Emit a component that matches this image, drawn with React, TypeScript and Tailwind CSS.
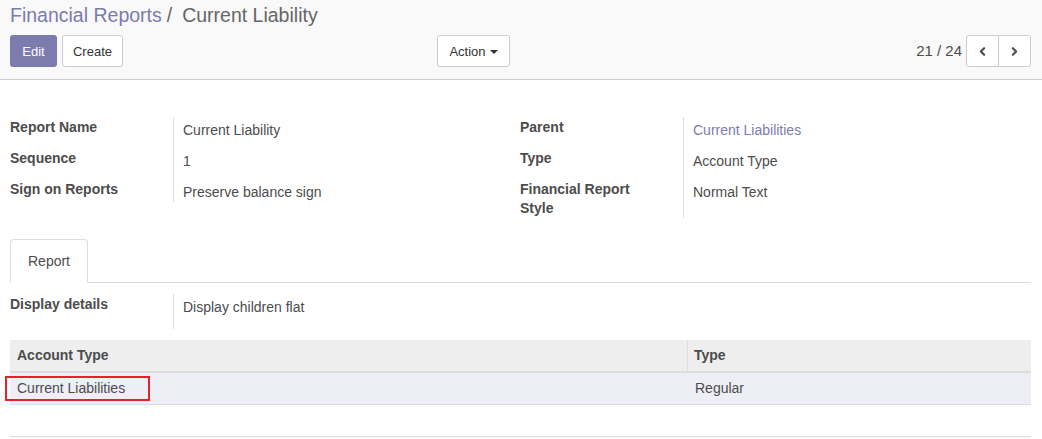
import { ChevronLeft, ChevronRight } from "lucide-react";

const font = "font-['Liberation_Sans','Helvetica_Neue',Arial,sans-serif]";

const Field = ({ label, value, link, last }: { label: string; value: string; link?: boolean; last?: boolean }) => (
  <>
    <div className={`font-bold text-[#4c4c4c] leading-[19px] pt-[1px] pr-[20px] ${last ? "" : "h-[31px]"}`}>{label}</div>
    <div className={`border-l border-[#ddd] pl-[9px] pt-[3px] leading-[20px] ${link ? "text-[#7c7bad]" : "text-[#4c4c4c]"} ${last ? "" : "h-[31px]"}`}>
      {value}
    </div>
  </>
);

export default function App() {
  return (
    <div className={`w-[1042px] h-[439px] overflow-hidden bg-white text-[14px] ${font}`}>
      <div className="h-[80px] bg-[#f9f9f9] border-b border-[#ccc] px-[10px]">
        <div className="h-[35px] pt-[3px] text-[19.5px] leading-[24px]">
          <span className="text-[#7c7bad]">Financial Reports</span>
          <span className="text-[#666] ml-[5px] mr-[10px]">/</span>
          <span className="text-[#666]">Current Liability</span>
        </div>
        <div className="flex items-center h-[32px]">
          <button className="h-[32px] w-[47px] pt-[1px] rounded-[3px] bg-[#7c7bad] text-white text-[13px]">Edit</button>
          <button className="ml-[5px] h-[32px] w-[61px] pt-[1px] rounded-[3px] bg-white border border-[#ccc] text-[#333] text-[13px]">Create</button>
          <div className="w-[314px]" />
          <button className="h-[32px] w-[73px] pt-[1px] rounded-[3px] bg-white border border-[#ccc] text-[#333] text-[13px] flex items-center justify-center gap-[4px]">
            Action
            <span className="inline-block w-0 h-0 border-l-[4px] border-r-[4px] border-t-[4px] border-l-transparent border-r-transparent border-t-[#333]" />
          </button>
          <div className="flex-1" />
          <span className="text-[#4c4c4c] text-[15px] mr-[4px]">21 / 24</span>
          <div className="flex h-[32px] rounded-[3px] border border-[#ccc] bg-white">
            <div className="w-[32px] flex items-center justify-center border-r border-[#ccc]">
              <ChevronLeft size={13} strokeWidth={4} className="text-[#4c4c4c]" />
            </div>
            <div className="w-[31px] flex items-center justify-center">
              <ChevronRight size={13} strokeWidth={4} className="text-[#4c4c4c]" />
            </div>
          </div>
          <div className="w-[1px]" />
        </div>
      </div>

      <div className="pl-[10px] pr-[11px]">
        <div className="flex pt-[37px]">
          <div className="w-[510px] grid grid-cols-[163px_1fr] content-start">
            <Field label="Report Name" value="Current Liability" />
            <Field label="Sequence" value="1" />
            <Field label="Sign on Reports" value="Preserve balance sign" last />
          </div>
          <div className="flex-1 grid grid-cols-[163px_1fr] content-start">
            <Field label="Parent" value="Current Liabilities" link />
            <Field label="Type" value="Account Type" />
            <Field label="Financial Report Style" value="Normal Text" last />
          </div>
        </div>

        <div className="mt-[21px] flex border-b border-[#ddd]">
          <div className="w-[78px] h-[44px] -mb-[1px] rounded-t-[4px] border border-[#ddd] border-b-white bg-white flex items-center justify-center text-[#4c4c4c]">
            Report
          </div>
        </div>

        <div className="grid grid-cols-[163px_1fr] mt-[11px]">
          <div className="font-bold text-[#4c4c4c] leading-[19px] pt-[1px] h-[35px]">Display details</div>
          <div className="border-l border-[#ddd] pl-[9px] pt-[3px] leading-[20px] text-[#4c4c4c] h-[35px]">Display children flat</div>
        </div>

        <div className="mt-[11px]">
          <div className="flex h-[33px] bg-[#eeeeee] border-b-2 border-[#ddd] font-bold text-[#4c4c4c]">
            <div className="w-[678px] pl-[7px] flex items-center border-r border-[#ddd]">Account Type</div>
            <div className="flex-1 pl-[6px] flex items-center">Type</div>
          </div>
          <div className="flex h-[32px] bg-[#eeeef6] border-b border-[#ddd] text-[#4c4c4c]">
            <div className="relative w-[678px] pl-[7px] flex items-center">
              Current Liabilities
              <div className="absolute left-[-5px] top-[3px] w-[145px] h-[25px] border-2 border-[#e8202a]" />
            </div>
            <div className="flex-1 pl-[7px] flex items-center">Regular</div>
          </div>
          <div className="h-[31px]" />
          <div className="h-[10px] border-t border-[#ddd] bg-[#fafafa]" />
        </div>
      </div>
    </div>
  );
}
